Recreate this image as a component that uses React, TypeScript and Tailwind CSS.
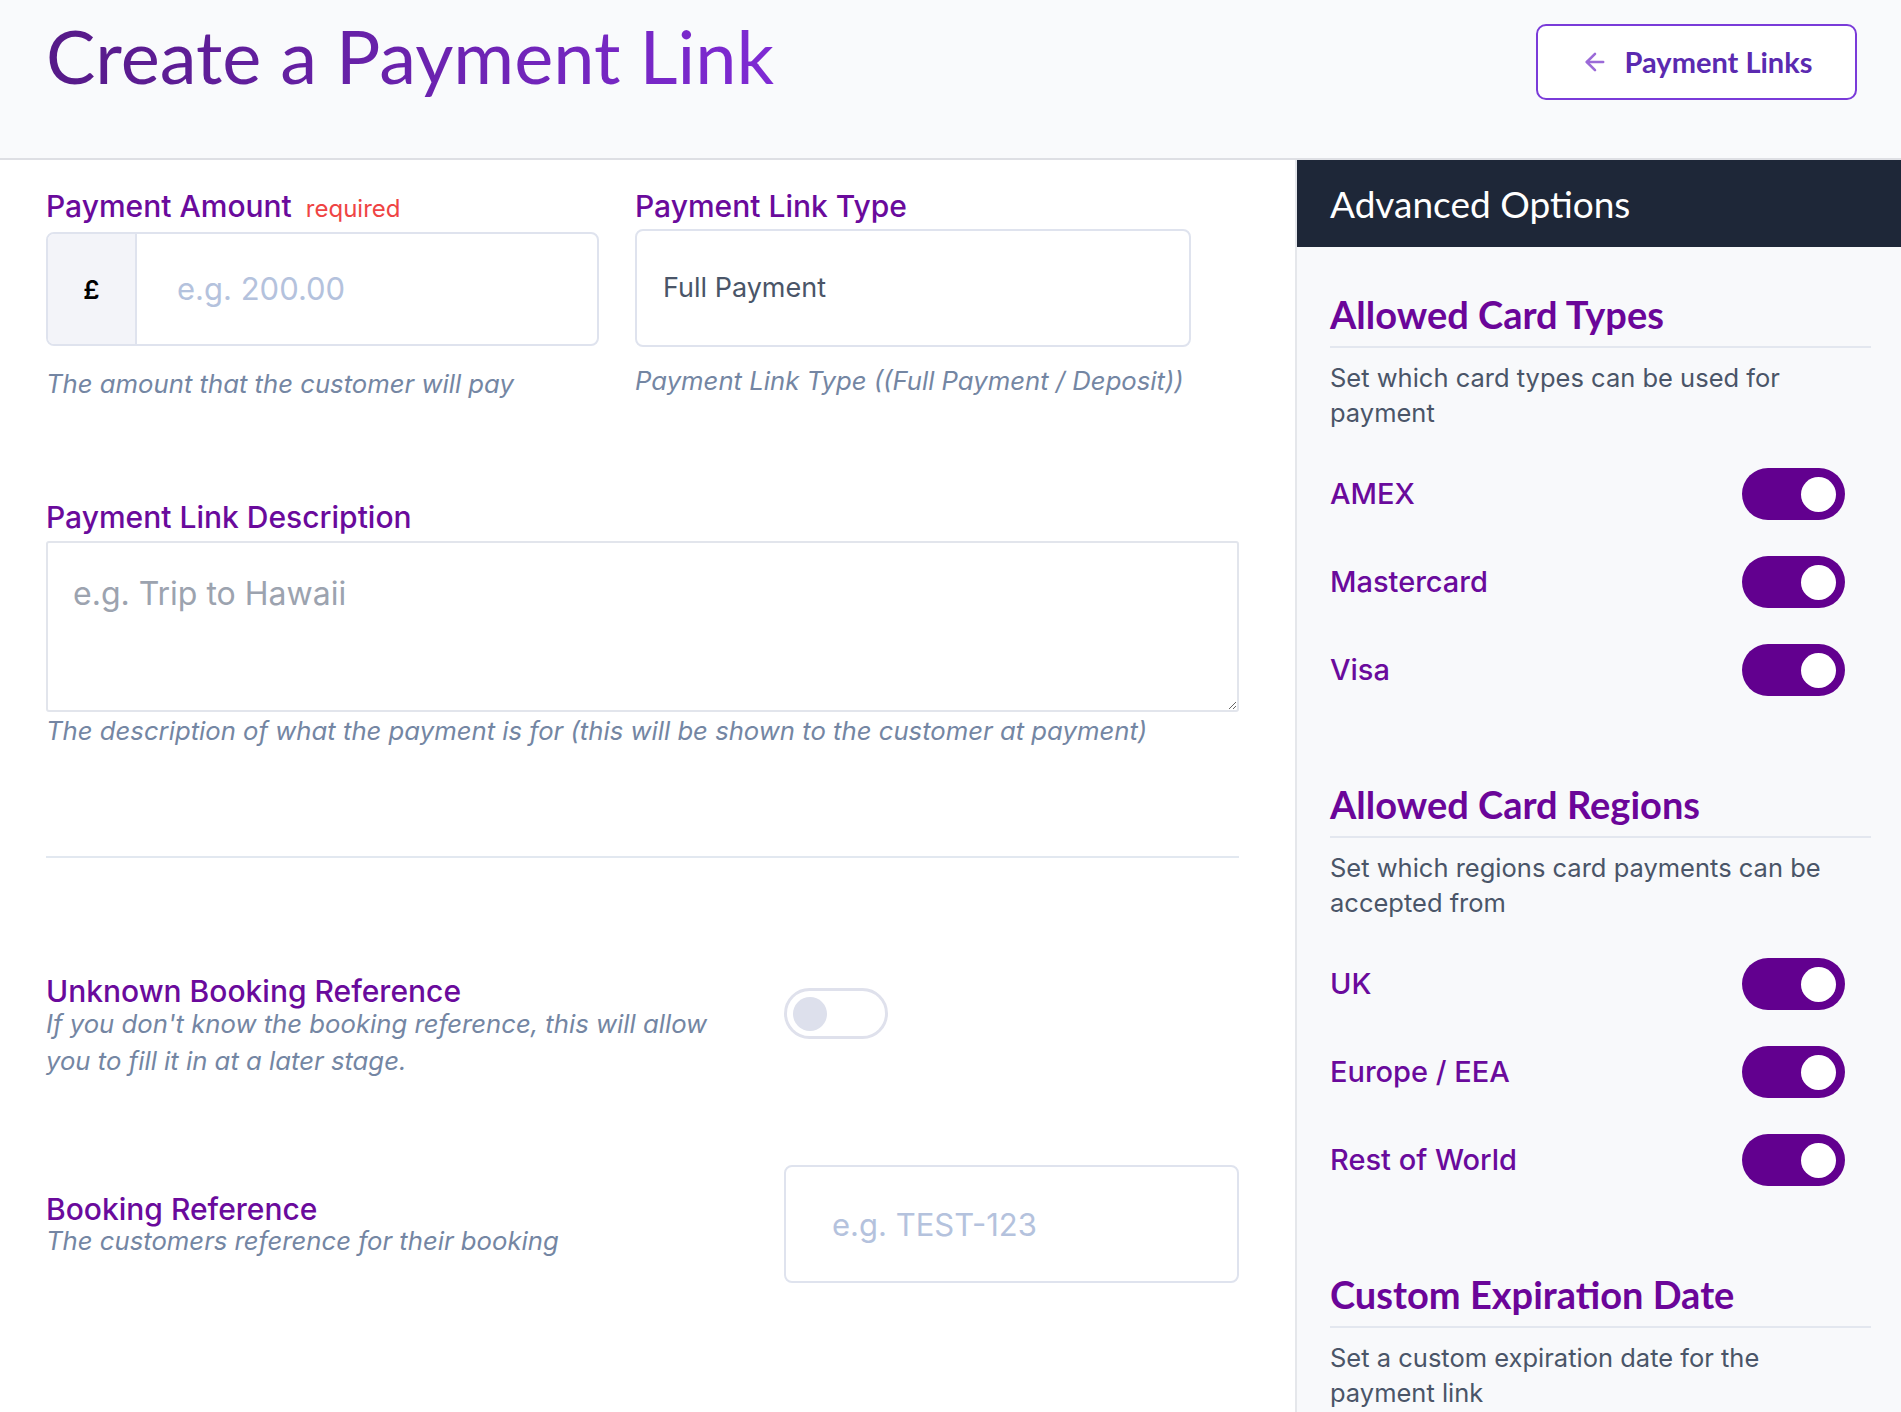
import React from "react";
import { ArrowLeft } from "lucide-react";

function Toggle({ on }: { on: boolean }) {
  if (on) {
    return (
      <div className="w-[103px] h-[52px] rounded-full bg-[#62008f] flex items-center justify-end pr-[9px]">
        <div className="w-[35px] h-[35px] rounded-full bg-white" />
      </div>
    );
  }
  return (
    <div className="w-[104px] h-[51px] rounded-full border-[3px] border-[#dfe1ec] bg-white flex items-center pl-[6px]">
      <div className="w-[34px] h-[34px] rounded-full bg-[#dde0ec]" />
    </div>
  );
}

function OptionSection({
  title,
  description,
  options,
}: {
  title: string;
  description: string;
  options: string[];
}) {
  return (
    <section>
      <h3 className="font-['Lato',sans-serif] font-bold text-[38px] leading-[44px] text-[#6b0599] pb-[10px] border-b-2 border-[#e3e7ef]">
        {title}
      </h3>
      <p className="mt-[12px] text-[25.5px] leading-[35px] text-[#4a5568] pr-[30px]">
        {description}
      </p>
      <div className="mt-[38px] flex flex-col gap-[36px] pr-[26px]">
        {options.map((option) => (
          <div key={option} className="flex items-center justify-between">
            <span className="text-[29px] font-medium text-[#6a0a9c]">
              {option}
            </span>
            <Toggle on />
          </div>
        ))}
      </div>
    </section>
  );
}

export default function App() {
  return (
    <div className="min-h-screen bg-white font-['Inter',sans-serif]">
      {/* Header */}
      <header className="h-[160px] bg-[#f9fafc] border-b-2 border-[#dedfe4] flex items-start justify-between pl-[46px] pr-[44px] pt-[18px]">
        <h1 className="font-['Lato',sans-serif] text-[74px] leading-none bg-linear-to-r from-[#561a88] to-[#7f2ad4] bg-clip-text text-transparent pb-[8px] pt-[1px]">
          Create a Payment Link
        </h1>
        <button className="mt-[6px] w-[321px] h-[76px] rounded-[10px] border-2 border-[#7a3bd9] bg-white flex items-center justify-center gap-[16px]">
          <ArrowLeft className="w-[28px] h-[28px] text-[#9b6ad8]" strokeWidth={2.2} />
          <span className="font-['Lato',sans-serif] font-bold text-[29px] text-[#5b2ab0]">
            Payment Links
          </span>
        </button>
      </header>

      <div className="flex min-h-[1252px]">
        {/* Main form */}
        <main className="flex-1 pl-[46px] pr-[56px] pt-[30px]">
          <div className="flex gap-[36px]">
            <div className="w-[553px]">
              <label className="flex items-baseline gap-[14px] leading-[32px]">
                <span className="text-[30px] font-medium text-[#6a0a9c]">
                  Payment Amount
                </span>
                <span className="text-[24px] text-[#ef4444]">required</span>
              </label>
              <div className="mt-[7px] h-[114px] border-2 border-[#dfe3ee] rounded-[8px] flex overflow-hidden">
                <div className="w-[89px] shrink-0 bg-[#f3f4f9] border-r-2 border-[#dfe3ee] flex items-center justify-center text-[26px] font-semibold text-black">
                  £
                </div>
                <input
                  className="min-w-0 flex-1 pl-[40px] text-[31px] outline-none placeholder:text-[#b4c2dd]"
                  placeholder="e.g. 200.00"
                />
              </div>
              <p className="mt-[22px] text-[25.7px] leading-[32px] italic text-[#7486a3]">
                The amount that the customer will pay
              </p>
            </div>
            <div className="w-[556px]">
              <label className="block text-[30px] font-medium leading-[32px] text-[#6a0a9c]">
                Payment Link Type
              </label>
              <div className="mt-[7px] h-[118px] border-2 border-[#dfe3ee] rounded-[8px] flex items-center pl-[26px] text-[27px] text-[#4a5568]">
                Full Payment
              </div>
              <p className="mt-[18px] text-[25.7px] leading-[32px] italic text-[#7486a3]">
                Payment Link Type ((Full Payment / Deposit))
              </p>
            </div>
          </div>

          <div className="mt-[101px]">
            <label className="block text-[30px] font-medium leading-[32px] text-[#6a0a9c]">
              Payment Link Description
            </label>
            <textarea
              className="mt-[8px] block w-full h-[171px] border-2 border-[#e2e5ec] rounded-[3px] pl-[25px] pt-[33px] text-[32px] leading-[36px] outline-none placeholder:text-[#9ca3af]"
              placeholder="e.g. Trip to Hawaii"
            />
            <p className="mt-[3px] text-[25.7px] leading-[32px] italic text-[#7486a3]">
              The description of what the payment is for (this will be shown to
              the customer at payment)
            </p>
          </div>

          <hr className="mt-[109px] border-t-2 border-[#e2e8f0]" />

          <div className="mt-[119px] grid grid-cols-[738px_1fr] items-start">
            <div className="pr-[56px]">
              <div className="text-[30px] font-medium leading-[28px] text-[#6a0a9c]">
                Unknown Booking Reference
              </div>
              <p className="text-[25.7px] leading-[37px] italic text-[#7486a3]">
                If you don't know the booking reference, this will allow you to
                fill it in at a later stage.
              </p>
            </div>
            <div className="mt-[11px]">
              <Toggle on={false} />
            </div>
          </div>

          <div className="mt-[86px] grid grid-cols-[738px_1fr] items-center">
            <div className="pt-[4px]">
              <div className="text-[30px] font-medium leading-[28px] text-[#6a0a9c]">
                Booking Reference
              </div>
              <p className="mt-[2px] text-[25.7px] leading-[32px] italic text-[#7486a3]">
                The customers reference for their booking
              </p>
            </div>
            <input
              className="w-[455px] h-[118px] border-2 border-[#dfe3ee] rounded-[8px] pl-[46px] text-[31px] outline-none placeholder:text-[#b4c2dd]"
              placeholder="e.g. TEST-123"
            />
          </div>
        </main>

        {/* Advanced options */}
        <aside className="w-[606px] shrink-0 bg-[#f8f9fb] border-l-2 border-[#e5e7eb]">
          <div className="h-[87px] bg-[#1e2738] flex items-center px-[33px]">
            <h2 className="font-['Lato',sans-serif] text-[37px] text-white">
              Advanced Options
            </h2>
          </div>
          <div className="pl-[33px] pr-[30px] pt-[45px] flex flex-col gap-[86px]">
            <OptionSection
              title="Allowed Card Types"
              description="Set which card types can be used for payment"
              options={["AMEX", "Mastercard", "Visa"]}
            />
            <OptionSection
              title="Allowed Card Regions"
              description="Set which regions card payments can be accepted from"
              options={["UK", "Europe / EEA", "Rest of World"]}
            />
            <section>
              <h3 className="font-['Lato',sans-serif] font-bold text-[38px] leading-[44px] text-[#6b0599] pb-[10px] border-b-2 border-[#e3e7ef]">
                Custom Expiration Date
              </h3>
              <p className="mt-[12px] text-[25.5px] leading-[35px] text-[#4a5568] pr-[30px]">
                Set a custom expiration date for the payment link
              </p>
            </section>
          </div>
        </aside>
      </div>
    </div>
  );
}
